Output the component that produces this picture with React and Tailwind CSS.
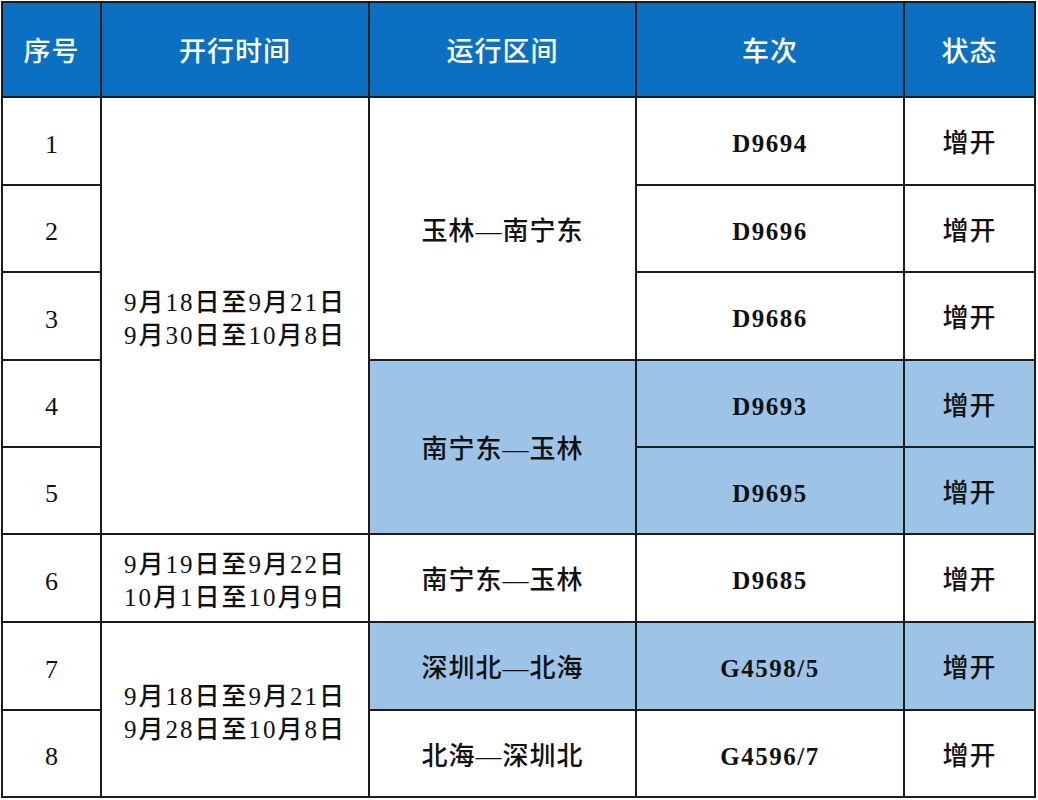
import React from 'react';

const trains = [
  { no: 'D9694', blue: false, row: 'row-start-2' },
  { no: 'D9696', blue: false, row: 'row-start-3' },
  { no: 'D9686', blue: false, row: 'row-start-4' },
  { no: 'D9693', blue: true, row: 'row-start-5' },
  { no: 'D9695', blue: true, row: 'row-start-6' },
  { no: 'D9685', blue: false, row: 'row-start-7' },
  { no: 'G4598/5', blue: true, row: 'row-start-8' },
  { no: 'G4596/7', blue: false, row: 'row-start-9' },
];

const head = [
  { t: '序号', col: 'col-start-1' },
  { t: '开行时间', col: 'col-start-2' },
  { t: '运行区间', col: 'col-start-3' },
  { t: '车次', col: 'col-start-4' },
  { t: '状态', col: 'col-start-5' },
];

const cell = 'flex items-center justify-center text-center text-[#111]';
const white = 'bg-white';
const blue = 'bg-[#9dc3e6]';
const date = `${cell} ${white} col-start-2 flex-col text-[25px] font-medium leading-[33px] tracking-[2px] pt-[6px]`;
const route = `${cell} col-start-3 text-[26px] font-medium tracking-[1px] pt-[5px]`;

export default function App() {
  return (
    <div className="w-[1038px] h-[800px] bg-white pl-[1px] pt-[1px]">
      <div className="grid w-[1035px] gap-[2px] p-[2px] bg-[#1c1c1c] grid-cols-[97px_266px_265px_266px_129px] grid-rows-[93px_86px_85px_86px_85px_85px_86px_86px_85px] font-['Liberation_Serif','Noto_Sans_CJK_SC',serif]">
        {head.map((h) => (
          <div
            key={h.t}
            className={`${cell} ${h.col} row-start-1 bg-[#0b70c2] !text-white text-[27px] tracking-[1px] font-medium pt-[6px]`}
          >
            {h.t}
          </div>
        ))}

        {trains.map((t, i) => (
          <div key={'n' + i} className={`${cell} ${white} ${t.row} col-start-1 text-[26px] font-medium pt-[6px]`}>
            {i + 1}
          </div>
        ))}

        <div className={`${date} row-start-2 row-span-5`}>
          <span>9月18日至9月21日</span>
          <span>9月30日至10月8日</span>
        </div>
        <div className={`${date} row-start-7`}>
          <span>9月19日至9月22日</span>
          <span>10月1日至10月9日</span>
        </div>
        <div className={`${date} row-start-8 row-span-2`}>
          <span>9月18日至9月21日</span>
          <span>9月28日至10月8日</span>
        </div>

        <div className={`${route} ${white} row-start-2 row-span-3`}>玉林—南宁东</div>
        <div className={`${route} ${blue} row-start-5 row-span-2`}>南宁东—玉林</div>
        <div className={`${route} ${white} row-start-7`}>南宁东—玉林</div>
        <div className={`${route} ${blue} row-start-8`}>深圳北—北海</div>
        <div className={`${route} ${white} row-start-9`}>北海—深圳北</div>

        {trains.map((t, i) => (
          <div
            key={'t' + i}
            className={`${cell} ${t.blue ? blue : white} ${t.row} col-start-4 text-[25px] font-bold tracking-[1.5px] pt-[6px]`}
          >
            {t.no}
          </div>
        ))}
        {trains.map((t, i) => (
          <div
            key={'s' + i}
            className={`${cell} ${t.blue ? blue : white} ${t.row} col-start-5 text-[26px] font-medium tracking-[1px] pt-[5px]`}
          >
            增开
          </div>
        ))}
      </div>
    </div>
  );
}
